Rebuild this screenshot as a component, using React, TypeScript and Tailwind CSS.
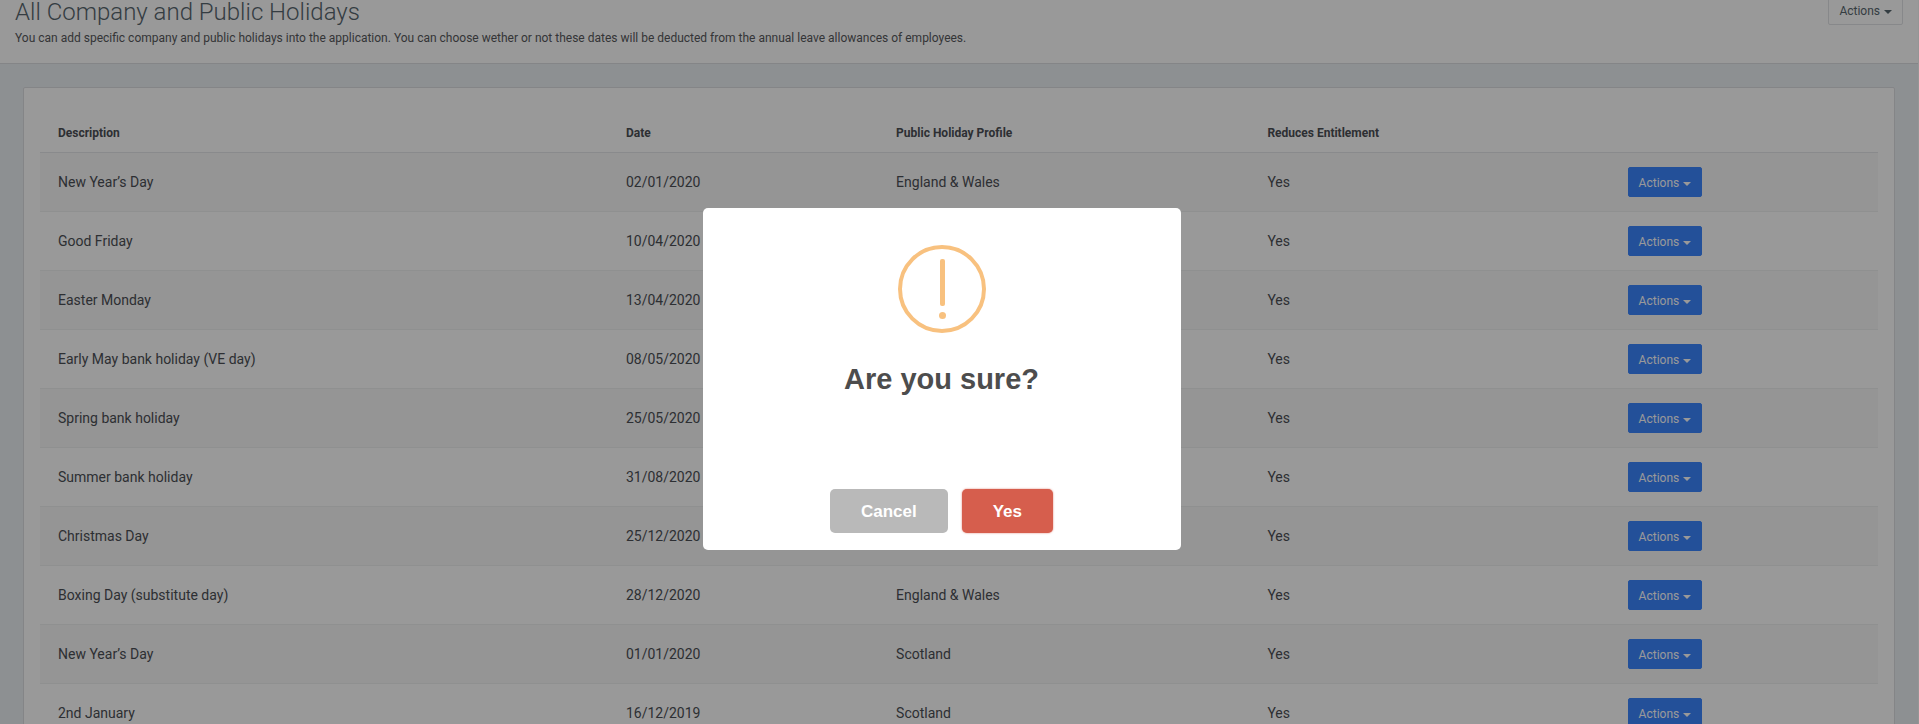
import { useState } from 'react';

type Holiday = {
  description: string;
  date: string;
  profile: string;
  reduces: boolean;
};

const holidays: Holiday[] = [
  { description: 'New Year’s Day', date: '02/01/2020', profile: 'England & Wales', reduces: true },
  { description: 'Good Friday', date: '10/04/2020', profile: 'England & Wales', reduces: true },
  { description: 'Easter Monday', date: '13/04/2020', profile: 'England & Wales', reduces: true },
  { description: 'Early May bank holiday (VE day)', date: '08/05/2020', profile: 'England & Wales', reduces: true },
  { description: 'Spring bank holiday', date: '25/05/2020', profile: 'England & Wales', reduces: true },
  { description: 'Summer bank holiday', date: '31/08/2020', profile: 'England & Wales', reduces: true },
  { description: 'Christmas Day', date: '25/12/2020', profile: 'England & Wales', reduces: true },
  { description: 'Boxing Day (substitute day)', date: '28/12/2020', profile: 'England & Wales', reduces: true },
  { description: 'New Year’s Day', date: '01/01/2020', profile: 'Scotland', reduces: true },
  { description: '2nd January', date: '16/12/2019', profile: 'Scotland', reduces: true },
];

function Caret() {
  return (
    <svg className="mt-0.5 h-1 w-2" viewBox="0 0 8 4" fill="currentColor" aria-hidden="true">
      <path d="M0 0h8L4 4z" />
    </svg>
  );
}

function ActionsButton({ primary = false, onClick }: { primary?: boolean; onClick?: () => void }) {
  return (
    <button
      type="button"
      onClick={onClick}
      className={`inline-flex h-[30px] items-center gap-1 rounded-xs border px-2.5 pt-0.5 text-xs ${
        primary ? 'border-[#3b86ff] bg-[#3b86ff] text-white' : 'border-[#e1e3e6] bg-white text-[#58666e]'
      }`}
    >
      Actions
      <Caret />
    </button>
  );
}

function ConfirmDialog({ onClose }: { onClose: () => void }) {
  return (
    <>
      <div className="fixed inset-0 bg-black/40" />
      <div
        role="alertdialog"
        aria-labelledby="confirm-title"
        className="fixed top-1/2 left-1/2 -mt-[154px] -ml-[257px] flex w-[478px] flex-col items-center rounded-[5px] bg-white pt-[37px] pb-[17px] font-['Liberation_Sans',Arial,sans-serif]"
      >
        <svg className="h-[88px] w-[88px]" viewBox="0 0 88 88" fill="none" aria-hidden="true">
          <circle cx="44" cy="44" r="42" stroke="#f8c17f" strokeWidth="4" />
          <rect x="42" y="14" width="5" height="47" rx="2" fill="#f8c17f" />
          <circle cx="44.5" cy="70.5" r="3.5" fill="#f8c17f" />
        </svg>
        <h2 id="confirm-title" className="mt-[26px] text-[29px] leading-10 font-bold text-[#4d4d4d]">
          Are you sure?
        </h2>
        <div className="mt-[90px] flex gap-3.5">
          <button
            type="button"
            onClick={onClose}
            className="h-11 rounded-[5px] bg-[#b9b9b9] px-[31px] pt-0.5 text-[17px] font-bold text-white"
          >
            Cancel
          </button>
          <button
            type="button"
            onClick={onClose}
            className="h-11 rounded-[5px] bg-[#d65e4d] px-[31px] pt-0.5 text-[17px] font-bold text-white shadow-[0_0_2px_rgba(214,94,77,0.8)]"
          >
            Yes
          </button>
        </div>
      </div>
    </>
  );
}

export default function App() {
  const [confirming, setConfirming] = useState(true);

  return (
    <div className="h-screen overflow-hidden bg-[#ecf0f3] font-[Roboto,sans-serif] text-[#4c4f55]">
      <div className="-mt-5 border-r border-[#f8f8f8]">
        {/* Page header */}
        <header className="flex items-start justify-between border-b border-[#dcdee1] bg-white px-[15px] pt-[15px] pb-4">
          <div>
            <h1 className="text-2xl leading-[34px] font-light text-[#58666e]">All Company and Public Holidays</h1>
            <p className="text-xs leading-[18px] text-[#58595c]">
              You can add specific company and public holidays into the application. You can choose wether or not these
              dates will be deducted from the annual leave allowances of employees.
            </p>
          </div>
          <ActionsButton />
        </header>

        {/* Holidays table */}
        <main className="p-[23px]">
          <div className="rounded-xs border border-[#dcdee1] bg-white p-4">
            <table className="w-full table-fixed text-left">
              <colgroup>
                <col className="w-[30.9%]" />
                <col className="w-[14.7%]" />
                <col className="w-[20.2%]" />
                <col className="w-[19.6%]" />
                <col />
              </colgroup>
              <thead>
                <tr className="text-xs leading-[18px]">
                  <th className="px-[18px] pt-5 pb-2.5">Description</th>
                  <th className="px-[18px] pt-5 pb-2.5">Date</th>
                  <th className="px-[18px] pt-5 pb-2.5">Public Holiday Profile</th>
                  <th className="px-[18px] pt-5 pb-2.5">Reduces Entitlement</th>
                  <th className="px-[18px] pt-5 pb-2.5" aria-label="Actions" />
                </tr>
              </thead>
              <tbody>
                {holidays.map((h, i) => (
                  <tr key={i} className="h-[59px] border-t border-[#eff0f1] text-sm first:border-[#e4e6e9] odd:bg-[#f8f8f8]">
                    <td className="px-[18px]">{h.description}</td>
                    <td className="px-[18px]">{h.date}</td>
                    <td className="px-[18px]">{h.profile}</td>
                    <td className="px-[18px]">{h.reduces ? 'Yes' : 'No'}</td>
                    <td className="px-[18px]">
                      <div className="flex">
                        <ActionsButton primary onClick={() => setConfirming(true)} />
                      </div>
                    </td>
                  </tr>
                ))}
              </tbody>
            </table>
          </div>
        </main>
      </div>

      {confirming && <ConfirmDialog onClose={() => setConfirming(false)} />}
    </div>
  );
}
